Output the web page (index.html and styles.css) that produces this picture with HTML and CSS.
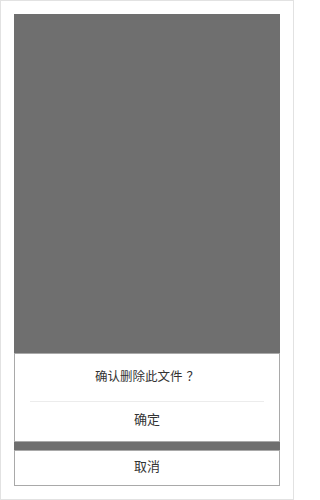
FILE: index.html
```html
<!DOCTYPE html>
<html lang="zh">
<head>
<meta charset="utf-8">
<link rel="stylesheet" href="styles.css">
</head>
<body>
<div class="frame">
  <div class="screen">
    <div class="sheet">
      <div class="group">
        <div class="message">确认删除此文件<span class="q">？</span></div>
        <div class="divider"></div>
        <div class="action">确定</div>
      </div>
      <div class="group cancel">
        <div class="action small">取消</div>
      </div>
    </div>
  </div>
</div>
</body>
</html>
```
FILE: styles.css
```css
html, body {
  margin: 0;
  padding: 0;
  background: #fff;
}
body {
  font-family: "Noto Sans CJK SC", sans-serif;
  color: #333;
}
.frame {
  box-sizing: border-box;
  width: 294px;
  height: 500px;
  border: 1px solid #e2e2e2;
  padding: 13px 13px 0 13px;
}
.screen {
  height: 472px;
  background: #6f6f6f;
  display: flex;
  flex-direction: column;
  justify-content: flex-end;
}
.sheet {
  display: flex;
  flex-direction: column;
  gap: 8px;
}
.group {
  box-sizing: border-box;
  background: #fff;
  border: 1px solid #a9a9a9;
  display: flex;
  flex-direction: column;
}
.message {
  height: 47px;
  display: flex;
  align-items: center;
  justify-content: center;
  font-size: 12.5px;
  padding-bottom: 4px;
  box-sizing: border-box;
}
.q {
  padding-left: 4px;
}
.divider {
  height: 1px;
  background: #ececec;
  margin: 0 15px;
}
.action {
  box-sizing: border-box;
  height: 39px;
  display: flex;
  align-items: center;
  justify-content: center;
  font-size: 13px;
  padding-bottom: 6px;
}
.action.small {
  height: 34px;
  padding-bottom: 5px;
}
```
